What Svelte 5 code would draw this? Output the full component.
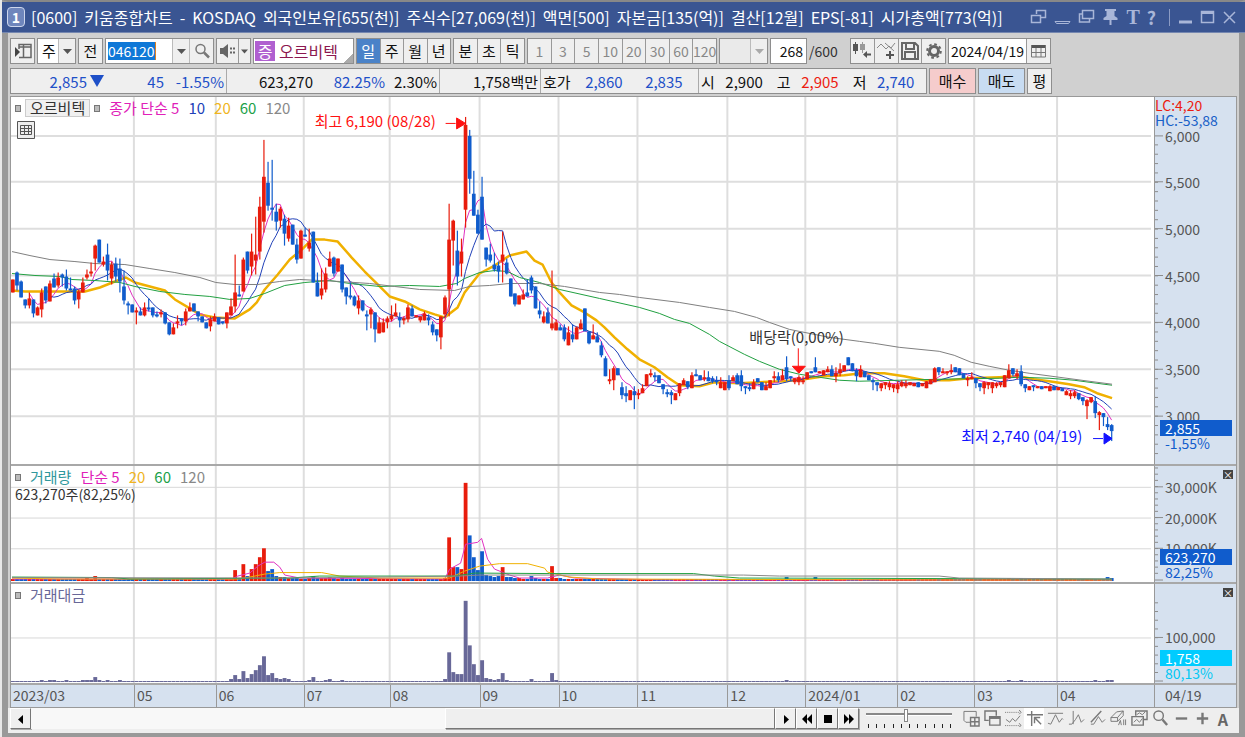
<script lang="ts">
	// kind, high, body top, body bottom, low (chart space, y grows downwards)
	const candleSource = `
r280 280 293 293|b272 273 286 291|b281 282 298 298|b300 300 306 309|r293 299 306 309|b300 300 314 318|r307 308 316 316|r289 293 310 318|b287 287 301 304|r281 284 302 302|
b274 279 288 288|r273 278 286 288|b274 275 278 287|b270 277 289 291|b278 289 291 291|b287 289 301 305|r290 292 300 309|r278 283 293 293|r270 275 278 280|r263 272 274 277|
r245 246 259 271|b240 240 263 263|r257 262 265 267|b244 255 271 281|r262 265 279 285|b258 264 277 282|b259 269 282 293|b271 287 301 305|b302 304 306 315|b305 305 313 313|
r308 311 313 325|b308 312 316 316|r303 308 316 317|b299 308 310 312|b308 308 316 318|b312 315 317 318|r310 313 315 318|b313 313 324 325|b323 323 335 336|r324 328 335 335|
r316 322 324 329|b319 319 322 326|r309 312 322 326|r303 308 312 312|b304 304 312 312|b312 312 317 322|b317 317 323 323|b323 323 329 329|r317 320 327 332|r314 317 322 322|
b318 318 325 325|b322 322 324 325|r313 313 324 329|r299 307 316 316|r255 293 307 313|b286 295 297 297|r258 260 292 292|b252 252 271 274|r234 252 267 276|r217 255 261 275|
r197 207 252 260|r140 177 222 233|b162 183 206 211|b160 208 210 221|b204 212 222 231|r207 209 221 228|b215 219 234 246|r218 226 239 242|b225 225 245 245|b239 245 260 264|
r230 231 259 259|b228 235 237 237|r229 243 249 252|b232 232 283 283|b273 283 297 297|r269 289 296 300|r268 274 290 293|r252 259 267 267|b257 258 274 277|r259 259 272 272|
b265 265 290 293|b288 288 297 305|b283 296 298 300|b296 297 306 307|r296 301 309 315|b301 301 311 312|b311 315 317 331|r308 310 315 329|b313 313 330 343|r318 323 334 334|
r319 323 333 333|r317 319 323 329|r306 316 320 322|r304 313 317 317|b313 318 321 328|r317 319 321 325|r305 308 320 323|b306 309 317 317|r316 316 318 318|r317 317 321 323|
r312 314 321 321|b315 318 321 326|b322 325 333 336|b330 330 336 342|r317 317 338 350|r296 298 315 318|r204 240 290 317|r220 221 241 266|b231 251 277 286|r239 252 264 277|
r117 125 210 228|b130 136 179 194|b171 194 216 216|b210 215 234 234|b177 197 240 240|b248 248 260 267|b244 255 261 263|b253 265 270 272|b262 266 272 283|r232 255 262 283|
b259 263 274 275|b279 279 297 297|b294 294 305 307|r296 296 305 305|r290 295 300 300|b280 293 297 297|b276 278 291 294|b287 287 309 309|b302 311 315 319|r312 317 323 324|
b308 313 324 324|r271 324 329 331|r320 323 331 331|b325 328 331 331|b325 328 340 342|r327 333 346 346|b325 335 340 343|r327 328 340 340|r320 324 330 330|b309 309 332 332|
b332 332 344 345|r325 336 340 340|b333 337 343 343|b342 346 356 358|b357 359 377 377|r370 380 382 385|r367 369 381 391|b369 369 376 376|b383 388 396 400|b387 394 397 403|
r391 391 401 401|b387 392 396 410|r390 394 396 400|r385 389 394 394|r375 375 387 387|r370 374 376 378|b373 376 378 382|b376 376 384 384|b385 385 390 395|b390 393 395 398|
b391 393 396 405|r394 394 401 401|r384 384 394 397|r379 381 386 386|b382 382 388 390|r373 376 389 389|b370 375 377 377|b376 376 381 381|r371 378 380 382|b372 378 382 382|
b377 379 382 384|b377 381 383 386|r378 383 389 389|r383 383 391 391|b376 381 389 391|r376 378 382 382|b374 376 385 385|b371 376 387 392|b387 387 389 395|b384 388 390 392|
r380 383 390 390|b379 379 383 383|b383 383 391 391|r383 387 391 391|r381 381 389 389|r372 377 379 383|b373 377 381 383|r370 376 381 381|b357 368 380 382|b377 377 379 382|
r379 379 383 385|r376 378 383 386|r377 381 383 385|r373 373 380 380|b372 372 374 374|b358 368 373 373|r372 372 374 374|r371 371 376 376|r367 370 373 373|b366 370 377 377|
r368 374 377 383|r364 370 374 377|r366 366 372 372|b358 358 366 366|b364 364 372 372|b369 371 377 382|r366 370 378 378|b372 372 378 378|b376 376 381 381|b379 381 383 391|
b383 383 386 392|r384 384 389 392|r383 383 386 390|r382 384 388 391|r385 385 389 393|r382 385 390 394|r381 383 387 388|r381 384 387 389|r383 383 386 386|r384 384 387 387|
b383 383 388 388|r384 384 387 387|r382 382 389 389|r380 380 385 385|r368 369 383 383|b368 368 373 376|r369 372 374 374|r372 372 374 376|r365 371 373 375|b368 368 373 373|
b369 369 376 376|b374 374 379 379|r377 379 381 387|r373 378 380 380|b379 379 384 389|b384 384 388 392|r382 383 389 395|r383 383 386 390|r383 383 389 394|r383 384 387 389|
r383 383 386 388|r376 376 388 388|r365 371 379 379|b369 369 375 377|r370 374 377 380|b366 372 385 387|b385 385 389 393|r387 387 391 391|b386 386 388 392|r387 387 389 389|
b387 387 390 390|r387 387 389 389|r386 387 392 392|b387 387 391 391|r388 388 391 391|b389 389 392 392|r391 392 396 396|r391 394 397 400|r391 393 397 399|b394 394 400 401|
b398 398 402 406|r400 401 407 420|r398 398 403 404|b397 402 414 419|r412 413 416 431|b414 414 418 427|b418 425 428 431|b425 426 432 442`;

	const candles = candleSource.replace(/\n/g, '').split('|').map((item, i) => {
		const [high, top, bottom, low] = item.slice(1).split(' ').map(Number);
		return { x: 12.8 + i * 4.119, up: item[0] === 'r', high, top, bottom, low };
	});

	function average(n: number) {
		const closes = candles.map((c) => (c.up ? c.top : c.bottom));
		return candles
			.slice(n - 1)
			.map((c, i) => {
				const sum = closes.slice(i, i + n).reduce((a, b) => a + b, 0);
				return `${c.x.toFixed(1)},${(sum / n).toFixed(1)}`;
			})
			.join(' ');
	}

	const ma20 = '12,291 25,292 45,292 85,292 100,288 115,282 126,278 135,283 150,287 165,291 175,300 190,309 200,315 215,318 235,319 250,310 257,303 265,290 278,275 290,260 302,250 312,240 325,240 338,242 352,258 365,272 378,285 390,297 405,302 420,310 435,315 445,318 458,308 465,293 480,274 495,266 510,256 527,252 535,261 543,265 552,283 560,293 572,306 585,313 597,321 605,328 615,338 628,350 640,360 655,368 668,378 680,386 700,387 715,383 740,384 760,383 785,382 805,380 825,377 845,376 862,374 885,374 905,377 925,381 950,381 970,379 1000,378 1020,377 1035,380 1050,382 1070,385 1085,388 1098,394 1113,399';
	const ma60 = '12,274 35,276 60,277 72,280 95,281 120,283 135,287 160,292 185,295 210,297 230,300 250,299 265,294 285,286 305,283 330,281 350,284 380,287 410,286 440,287 457,284 465,279 480,273 495,271 508,272 520,278 540,283 560,290 600,299 640,308 660,314 675,320 690,324 710,335 720,342 745,355 760,362 780,370 800,375 820,378 840,381 860,382 900,381 940,380 1000,379 1020,378 1050,379 1075,381 1090,383 1105,385 1113,386';
	const ma120 = '12,252 30,256 50,260 75,262 95,264 125,265 150,269 175,273 200,278 216,283 235,285 258,285 280,282 300,280 320,281 340,282 370,284 395,287 420,290 455,291 470,287 490,286 510,284 540,284 565,287 600,293 620,295 640,298 680,303 710,308 735,312 757,318 770,323 790,330 830,338 860,342 875,344 900,348 940,352 955,356 972,363 990,367 1010,371 1030,374 1060,378 1090,382 1113,385';

	const volumes: Record<number, number> = {
		18: 3, 20: 5, 54: 11, 55: 3, 56: 17, 57: 5, 58: 12, 59: 17, 60: 24, 61: 33, 62: 10, 63: 12, 64: 5, 65: 4, 66: 4, 67: 3, 68: 3, 69: 3,
		72: 3, 73: 5, 74: 3, 75: 3, 76: 3, 77: 4, 78: 3, 80: 3, 105: 3, 106: 44, 107: 14, 108: 14, 109: 12, 110: 99, 111: 46, 112: 24, 113: 11,
		114: 30, 115: 6, 116: 5, 117: 4, 118: 5, 119: 14, 120: 4, 121: 4, 122: 3, 123: 3, 126: 5, 127: 3, 131: 15, 132: 3, 133: 3,
		188: 4, 195: 4, 242: 3, 245: 3, 266: 4, 267: 3
	};
	const amounts: Record<number, number> = {
		7: 2, 9: 2, 10: 2, 13: 2, 17: 2, 18: 2, 19: 2, 20: 5, 21: 2, 23: 2, 26: 2, 53: 3, 54: 7, 55: 3, 56: 11, 57: 4, 58: 8, 59: 12, 60: 17, 61: 26,
		62: 7, 63: 9, 64: 4, 65: 3, 66: 4, 67: 3, 72: 2, 73: 5, 76: 2, 77: 3, 80: 2, 105: 3, 106: 30, 107: 10, 108: 8, 109: 8, 110: 82, 111: 37,
		112: 18, 113: 7, 114: 22, 115: 4, 116: 3, 117: 2, 118: 3, 119: 9, 120: 2, 126: 3, 131: 9, 132: 2, 188: 2, 242: 2, 245: 2, 263: 2, 266: 2, 267: 2
	};

	const months = [
		{ x: 11, label: '2023/03' },
		{ x: 134, label: '05' },
		{ x: 216, label: '06' },
		{ x: 304, label: '07' },
		{ x: 390, label: '08' },
		{ x: 480, label: '09' },
		{ x: 559, label: '10' },
		{ x: 638, label: '11' },
		{ x: 728, label: '12' },
		{ x: 806, label: '2024/01' },
		{ x: 898, label: '02' },
		{ x: 975, label: '03' },
		{ x: 1058, label: '04' }
	];
	const monthColumns = months.map((m, i) => `${(months[i + 1]?.x ?? 1155) - m.x}fr`).join(' ');

	const prices = [
		{ y: 136, label: '6,000' },
		{ y: 182, label: '5,500' },
		{ y: 229, label: '5,000' },
		{ y: 276, label: '4,500' },
		{ y: 323, label: '4,000' },
		{ y: 370, label: '3,500' },
		{ y: 417, label: '3,000' }
	];
	const volumeMarks = [
		{ y: 487, label: '30,000K' },
		{ y: 518, label: '20,000K' },
		{ y: 549, label: '10,000K' }
	];
	const titleParts = ['[0600]', '키움종합차트', '-', 'KOSDAQ', '외국인보유[655(천)]', '주식수[27,069(천)]', '액면[500]', '자본금[135(억)]', '결산[12월]', 'EPS[-81]', '시가총액[773(억)]'];

	const steps = (from: number, to: number, by: number) =>
		Array.from({ length: Math.floor((to - from) / by) + 1 }, (_, i) => from + i * by);
	const percent = (value: number, start: number, size: number) => ((value - start) / size) * 100;

	let code = $state('046120');
	let count = $state('268');
	let date = $state('2024/04/19');
	let period = $state('일');
	let speed = $state(46);
</script>

{#snippet down()}
	<svg class="arrow" width="9" height="5" viewBox="0 0 9 5" aria-hidden="true"><path d="M0 0h9L4.500 5z" fill="currentColor" /></svg>
{/snippet}

{#snippet verticals(y: number, h: number)}
	<g stroke="#dedede" stroke-width="2">
		{#each months.slice(1) as m}
			<line x1={m.x} x2={m.x} y1={y} y2={y + h} />
		{/each}
	</g>
{/snippet}

{#snippet ticks(y: number, h: number, major: number[], minor: number[])}
	<svg class="ticks" viewBox="0 {y} 8 {h}" preserveAspectRatio="none" aria-hidden="true">
		<g stroke="#8c8c8c" shape-rendering="crispEdges">
			{#each minor as t}<line x1="0" x2="3" y1={t} y2={t} />{/each}
			{#each major as t}<line x1="0" x2="8" y1={t} y2={t} />{/each}
		</g>
	</svg>
{/snippet}

<div class="desktop">
	<main class="window">
		<header class="title-bar">
			<span class="badge">1</span>
			<h1>{#each titleParts as part}<span>{part}</span>{/each}</h1>
			<div class="window-tools">
				<button aria-label="Link window"><svg width="17" height="16" viewBox="0 0 17 16"><path stroke-width="1.500" d="M6.500 5V1.500h9v7H11M1.500 6.500h9v7h-9z" /></svg></button>
				<button aria-label="Dock"><svg width="17" height="16" viewBox="0 0 17 16"><path d="M1 12.500h15l-1.500 2h-12z" /></svg></button>
				<button aria-label="Duplicate"><svg width="17" height="16" viewBox="0 0 17 16"><path stroke-width="1.500" d="M4.500 1.500h11v8h-11zM4 5H1.500v8h10v-3" /></svg></button>
				<button aria-label="Pin"><svg width="17" height="18" viewBox="0 0 17 18"><path fill="#a9b6d8" stroke="none" d="M3 1h11v2h-1.500v5l3 2v2H9.500v5h-2v-5h-6v-2l3-2V3H3z" /></svg></button>
				<button class="letter serif">T</button>
				<button class="letter">?</button>
				<i></i>
				<button aria-label="Minimize"><svg width="15" height="16" viewBox="0 0 15 16"><path stroke-width="3" d="M1 13h13" /></svg></button>
				<button aria-label="Maximize"><svg width="15" height="16" viewBox="0 0 15 16"><path stroke-width="1.500" d="M1.500 2.500h12v11h-12z" /><path stroke-width="3" d="M1 3.500h13" /></svg></button>
				<button aria-label="Close"><svg width="15" height="16" viewBox="0 0 15 16"><path stroke-width="1.500" d="M2 3l11 11M13 3L2 14" /></svg></button>
			</div>
		</header>

		<div class="toolbar">
			<button class="box icon" aria-label="Side panel"><svg width="18" height="18" viewBox="0 0 18 18"><path fill="none" stroke="#666" stroke-width="1.500" d="M5 7V2.500h12v13H5M9.500 3v12M5 5h12" /><path fill="#444" d="M1 5l5 5-5 5z" /></svg></button>
			<div class="box combo kind">
				<select aria-label="Market"><option>주</option></select>
				<span class="drop">{@render down()}</span>
			</div>
			<button class="box icon">전</button>
			<div class="box combo code">
				<span class="field"><input aria-label="Stock code" bind:value={code} /></span>
				<button class="drop" aria-label="Recent codes">{@render down()}</button>
				<button class="find" aria-label="Find"><svg width="16" height="16" viewBox="0 0 16 16"><g fill="none" stroke="#777"><circle cx="6.500" cy="6" r="4.500" stroke-width="1.500" /><path stroke-width="2.500" d="M10 9.500l5 5" /></g></svg></button>
			</div>
			<div class="box combo sound">
				<button aria-label="Sound"><svg width="17" height="16" viewBox="0 0 17 16"><path fill="#666" d="M1 5h3l5-4v14l-5-4H1z" /><path stroke="#666" stroke-width="2" stroke-dasharray="2 1" d="M11 5.500h5M11 9.500h5" /></svg></button>
				<button class="small" aria-label="Sound options">{@render down()}</button>
			</div>
			<div class="box name"><b>증</b><span>오르비텍</span></div>
			<div class="box group days">
				{#each ['일', '주', '월', '년'] as p}
					<button class:active={period === p} aria-pressed={period === p} onclick={() => (period = p)}>{p}</button>
				{/each}
			</div>
			<div class="box group intraday">
				{#each ['분', '초', '틱'] as p}
					<button class:active={period === p} aria-pressed={period === p} onclick={() => (period = p)}>{p}</button>
				{/each}
			</div>
			<div class="box group minutes">
				{#each [1, 3, 5, 10, 20, 30, 60, 120] as n}<button>{n}</button>{/each}
			</div>
			<div class="box combo unit">
				<select aria-label="Minute interval" disabled><option></option></select>
				<span class="drop">{@render down()}</span>
			</div>
			<input class="box count" aria-label="Candle count" bind:value={count} />
			<span class="total">/600</span>
			<div class="box group tools">
				<button aria-label="Add candle"><svg width="20" height="18" viewBox="0 0 20 18"><path fill="#555" d="M3 0h1v2h2v7H4v3H3V9H1V2h2zM15 9v2.500h4v2h-4V16l-4-3.500z" /><path fill="#999" d="M10 0h1v2h2v6h-2v3h-1V8H8V2h2z" /></svg></button>
				<button aria-label="Add indicator"><svg width="20" height="18" viewBox="0 0 20 18"><path fill="none" stroke="#888" d="M1 6l4-4 5 5 3-3 2 2 4-5M9 1l9 8" /><path fill="none" stroke="#555" stroke-width="2" d="M14 9v8M10 13h8" /></svg></button>
				<button aria-label="Save"><svg width="18" height="18" viewBox="0 0 18 18"><path fill="none" stroke="#666" stroke-width="2" d="M1 1h13l3 3v13H1zM5 1v6h8V1M4 17v-7h10v7" /></svg></button>
				<button aria-label="Settings"><svg width="16" height="16" viewBox="0 0 16 16"><circle cx="8" cy="8" r="4.500" fill="none" stroke="#666" stroke-width="3" /><circle cx="8" cy="8" r="6.800" fill="none" stroke="#666" stroke-width="2" stroke-dasharray="2.700 2.640" /></svg></button>
			</div>
			<div class="box combo date">
				<input aria-label="Date" bind:value={date} />
				<button aria-label="Calendar"><svg width="15" height="14" viewBox="0 0 15 14"><path fill="#555" d="M0 1h15v3H0z" /><path fill="none" stroke="#777" d="M.500 1v12h14V1M5 4v9M10 4v9M0 8.500h15" /></svg></button>
			</div>
		</div>

		<div class="quote">
			<div class="box values">
				<div class="cell blue"><span class="w76">2,855</span><svg class="fall" width="14" height="12" viewBox="0 0 14 12" aria-hidden="true"><path fill="#1e50c8" d="M0 0h14L7 12z" /></svg><span class="w60">45</span><span class="w60">-1.55%</span></div>
				<div class="cell"><span class="w86">623,270</span><span class="w72 blue">82.25%</span><span class="w52">2.30%</span></div>
				<div class="cell"><span class="w98">1,758백만</span></div>
				<div class="cell offers"><span class="tag">호가</span><span class="w52 blue">2,860</span><span class="w60 blue">2,835</span></div>
				<div class="cell"><span class="tag">시</span><span class="w48">2,900</span><span class="tag gap">고</span><span class="w48 red">2,905</span><span class="tag gap">저</span><span class="w48 blue">2,740</span></div>
			</div>
			<button class="box trade buy">매수</button>
			<button class="box trade sell">매도</button>
			<button class="box icon">평</button>
		</div>

		<section class="chart" aria-label="오르비텍">
			<div class="plot">
				<svg class="canvas" viewBox="11 97 1144 368" preserveAspectRatio="none" aria-hidden="true">
					{@render verticals(97, 368)}
					<g stroke="#dedede" stroke-width="2">
						{#each prices as p}<line x1="11" x2="1152" y1={p.y} y2={p.y} />{/each}
					</g>
					<g fill="none" stroke-linejoin="round">
						<polyline points={ma20} stroke="#f0b000" stroke-width="2.500" />
						<polyline points={average(5)} stroke="#e030c0" />
						<polyline points={average(10)} stroke="#2040b8" />
						<polyline points={ma60} stroke="#20a040" />
						<polyline points={ma120} stroke="#808080" />
					</g>
					{#each candles as c}
						<g fill={c.up ? '#e81c0c' : '#105ccc'}>
							<rect x={c.x - 0.5} y={c.high} width="1.200" height={c.low - c.high} />
							<rect x={c.x - 1.8} y={c.top} width="3.700" height={c.bottom - c.top} />
						</g>
					{/each}
					<path stroke="#f11" fill="#f11" d="M446 123.500h10M457 118l9 5.500-9 5.500zM799 349v18M793 367h13l-6.500 7z" />
					<path stroke="#11f" fill="#11f" d="M1094 439.500h10M1105 434l8 5.500-8 5.500z" />
				</svg>
				<div class="legend">
					<i class="mark"></i><button class="stock">오르비텍</button><i class="mark"></i>
					<span class="pink">종가 단순 5</span><span class="navy">10</span><span class="gold">20</span><span class="green">60</span><span class="gray">120</span>
				</div>
				<button class="sheet" aria-label="Data table"><svg width="18" height="18" viewBox="0 0 18 18"><path fill="#eee" stroke="#555" d="M.500.500h17v17H.500z" /><path fill="none" stroke="#555" d="M3.500 4.500h11v9h-11zM7.500 4v10M11.500 4v10M3 7.500h12M3 10.500h12" /></svg></button>
				<span class="note high" style="left: {percent(315, 11, 1144)}%; top: {percent(112, 97, 368)}%">최고 6,190 (08/28)</span>
				<span class="note event" style="left: {percent(750, 11, 1144)}%; top: {percent(329, 97, 368)}%">배당락(0,00%)</span>
				<span class="note low" style="left: {percent(962, 11, 1144)}%; top: {percent(428, 97, 368)}%">최저 2,740 (04/19)</span>
			</div>
			<div class="axis">
				{@render ticks(97, 368, prices.map((p) => p.y), steps(145, 460, 9.38))}
				{#each prices as p}<span class="mark-label" style="top: {percent(p.y, 97, 368)}%">{p.label}</span>{/each}
				<div class="limits"><span class="red">LC:4,20</span><span>HC:-53,88</span></div>
				<div class="current" style="top: {percent(421, 97, 368)}%"><b>2,855</b><span>-1,55%</span></div>
			</div>

			<div class="plot">
				<svg class="canvas" viewBox="11 466 1144 117" preserveAspectRatio="none" aria-hidden="true">
					{@render verticals(466, 117)}
					<g stroke="#d8d8d8">
						{#each volumeMarks as p}<line x1="11" x2="1152" y1={p.y + 0.5} y2={p.y + 0.5} />{/each}
					</g>
					{#each candles as c, i}
						<rect x={c.x - 1.8} y={582 - (volumes[i] ?? 2)} width="3.800" height={volumes[i] ?? 2} fill={c.up ? '#e81c0c' : '#105ccc'} />
					{/each}
					<g fill="none">
						<polyline points="12,580 232,580 238,577 250,574 258,567 265,563 274,563 280,568 285,576 300,579 445,580 450,570 461,564 466,545 478,543 482,539 488,560 495,570 510,576 520,579 548,579 560,576 575,579 670,581 1113,581" stroke="#e030c0" />
						<polyline points="12,579 60,580 240,580 265,575 280,573.500 322,573.500 340,577 380,579 450,579 465,572 480,567 500,564.500 528,564.500 545,569 548,573 570,578 600,580 960,581 1113,581" stroke="#f0b000" />
						<polyline points="12,578 112,578.500 130,580 290,579 320,577 455,577 475,574 550,574.500 694,574.500 715,577 740,579 1113,580" stroke="#20a040" />
						<polyline points="12,578.500 300,579 460,577 480,576 744,576 780,577 940,577 960,579 1113,580" stroke="#888" />
					</g>
				</svg>
				<div class="legend"><i class="mark"></i><span class="teal">거래량</span><span class="pink">단순 5</span><span class="gold">20</span><span class="green">60</span><span class="gray">120</span></div>
				<div class="summary">623,270주(82,25%)</div>
			</div>
			<div class="axis">
				{@render ticks(466, 117, [487, 518, 549, 581], steps(468, 580, 6.25))}
				{#each volumeMarks as p}<span class="mark-label" style="top: {percent(p.y, 466, 117)}%">{p.label}</span>{/each}
				<div class="current" style="top: {percent(550, 466, 117)}%"><b>623,270</b><span>82,25%</span></div>
				<button class="close" aria-label="Close volume">×</button>
			</div>

			<div class="plot">
				<svg class="canvas" viewBox="11 584 1144 100" preserveAspectRatio="none" aria-hidden="true">
					{@render verticals(584, 100)}
					<line x1="11" x2="1152" y1="638.500" y2="638.500" stroke="#d8d8d8" />
					{#each candles as c, i}
						<rect x={c.x - 1.8} y={683 - (amounts[i] ?? 1)} width="3.900" height={amounts[i] ?? 1} fill="#686898" />
					{/each}
				</svg>
				<div class="legend"><i class="mark"></i><span class="slate">거래대금</span></div>
			</div>
			<div class="axis">
				{@render ticks(584, 100, [638, 682], steps(603, 680, 8.8))}
				<span class="mark-label" style="top: {percent(638, 584, 100)}%">100,000</span>
				<div class="current cyan" style="top: {percent(651, 584, 100)}%"><b>1,758</b><span>80,13%</span></div>
				<button class="close" aria-label="Close amount">×</button>
			</div>

			<div class="months" style="grid-template-columns: {monthColumns}">
				{#each months as m}<span>{m.label}</span>{/each}
			</div>
			<div class="months last"><span>04/19</span></div>
		</section>

		<footer class="bottom">
			<button class="raised" aria-label="Scroll left"><svg width="16" height="16" viewBox="0 0 16 16"><path d="M10 4v9L5 8.500z" /></svg></button>
			<div class="track"><div class="thumb raised"></div></div>
			<button class="raised" aria-label="Scroll right"><svg width="16" height="16" viewBox="0 0 16 16"><path d="M6 4v9l5-4.500z" /></svg></button>
			<button class="raised" aria-label="Rewind"><svg width="16" height="16" viewBox="0 0 16 16"><path d="M8 3v10L3 8zM13 3v10L8 8z" /></svg></button>
			<button class="raised" aria-label="Stop"><svg width="16" height="16" viewBox="0 0 16 16"><path d="M4 4h8v8H4z" /></svg></button>
			<button class="raised" aria-label="Forward"><svg width="16" height="16" viewBox="0 0 16 16"><path d="M3 3v10l5-5zM8 3v10l5-5z" /></svg></button>
			<div class="speed">
				<input type="range" min="0" max="100" aria-label="Speed" bind:value={speed} />
				<div class="dots">{#each steps(0, 10, 1) as _}<i></i>{/each}</div>
			</div>
			<div class="draw-tools">
				<button aria-label="New pane"><svg viewBox="0 0 18 18"><path d="M8 13H3l-2-2V1.500h13V7" /><path stroke-width="1.500" d="M8 8h9v9H8zM12.500 8v9M8 12.500h9" /></svg></button>
				<button aria-label="Overlap panes"><svg viewBox="0 0 18 18"><path stroke-width="1.500" d="M5 11H1V1h12v5M6 7h11v9H6z" /><path stroke-width="3" d="M6 8h11" /></svg></button>
				<button aria-label="Range"><svg viewBox="0 0 18 18"><path stroke-dasharray="1 1" d="M0 2.500h16M0 16.500h16" /><path d="M1 10l4 3 3-4 3 3 5-6M15 0l2 2.500-2 2M15 14l2 2.500-2 1.500" /></svg></button>
				<button class="pressed" aria-label="Crosshair"><svg viewBox="0 0 18 18"><path stroke-width="1.500" d="M1 5h17M6 1v16M9 8l7 7M9 14V8h6" /></svg></button>
				<button aria-label="Horizontal line"><svg viewBox="0 0 18 18"><path d="M1 3.500h16M1 14l3 1 5-10 4 8 3-4 1 1" /></svg></button>
				<button aria-label="Vertical line"><svg viewBox="0 0 18 18"><path d="M5.500 1v14M1 15h3l4-5 3-5 3 8 3-3" /></svg></button>
				<button aria-label="Trend line"><svg viewBox="0 0 18 18"><path stroke-width="1.500" d="M2 13L13 1" /><path d="M2 15h3l5-8 4 6 3-3" /></svg></button>
				<button aria-label="Erase all"><svg viewBox="0 0 18 18"><path d="M1 8l6-6 7-1v5l-6 6H1zM1 8h7l6-7M8 8v4M9 16l2-5 1 5M14.500 10v6M16.500 10v6" /></svg></button>
				<button aria-label="Compare"><svg viewBox="0 0 18 18"><path stroke-width="1.500" d="M5 6V1h12v9h-4M1 7h12v9H1z" /><path d="M6 5l3-2 3 2 3-3M3 13l3-3 3 3 3-4" /></svg></button>
				<button aria-label="Magnify"><svg viewBox="0 0 18 18"><circle cx="7" cy="6" r="5" stroke-width="1.500" /><path stroke-width="2.500" d="M11 10l5 6" /></svg></button>
				<button aria-label="Zoom out"><svg viewBox="0 0 18 18"><path stroke-width="2.500" d="M3 9h12" /></svg></button>
				<button aria-label="Zoom in"><svg viewBox="0 0 18 18"><path stroke-width="2.500" d="M3 9h12M9 3v12" /></svg></button>
				<button class="auto">A</button>
			</div>
		</footer>
	</main>
</div>

<style>
	:global(body) {
		margin: 0;
	}

	.desktop {
		box-sizing: border-box;
		min-height: 100vh;
		display: flex;
		padding-left: 2px;
		background: #e8e8e8;
		font-family: 'Noto Sans CJK KR', sans-serif;
		font-size: 14px;
		line-height: 18px;
		color: #111;
	}

	.desktop * {
		box-sizing: border-box;
	}

	.window {
		flex: 1;
		min-width: 0;
		display: flex;
		flex-direction: column;
		border: solid #999;
		border-width: 2px 6px 4px;
		border-top-color: #888;
		background: #d0d0d0;
	}

	button,
	input,
	select {
		margin: 0;
		padding: 0;
		border: 0;
		border-radius: 0;
		background: none;
		font: inherit;
		color: inherit;
	}

	button {
		display: flex;
		align-items: center;
		justify-content: center;
	}

	.title-bar {
		height: 31px;
		display: flex;
		align-items: center;
		margin: 0 -6px;
		padding: 0 8px 0 5px;
		background: #3a5592;
		border-bottom: 1px solid #7587b0;
		color: #fff;
	}

	.badge {
		width: 18px;
		height: 20px;
		border: 1px solid #cdd6ec;
		border-radius: 4px;
		background: #6f86bc;
		text-align: center;
		font-weight: 700;
	}

	h1 {
		display: flex;
		flex: 1;
		gap: 7px;
		margin: 0 0 0 6px;
		font-size: 16px;
		line-height: 20px;
		font-weight: 400;
		white-space: nowrap;
	}

	.window-tools {
		display: flex;
		align-items: center;
		gap: 7px;
		color: #a9b6d8;
	}

	.window-tools svg {
		fill: none;
		stroke: #a9b6d8;
	}

	.window-tools i {
		width: 1px;
		height: 17px;
		margin: 0 1px 0 6px;
		background: #8b9bc4;
	}

	.letter {
		font-size: 18px;
		font-weight: 700;
	}

	.serif {
		font-family: 'Liberation Serif', serif;
		font-size: 20px;
	}

	.toolbar {
		display: flex;
		gap: 2px;
		height: 35px;
		padding: 5px 0 0 2px;
	}

	.box {
		height: 26px;
		border: 1px solid #8e8e8e;
		background: #efefef;
	}

	.icon {
		width: 25px;
		font-size: 15px;
	}

	.combo {
		display: flex;
		position: relative;
	}

	.combo select {
		flex: 1;
		min-width: 0;
		padding-left: 4px;
		appearance: none;
		background: #fff;
		font-size: 15px;
	}

	.kind {
		width: 39px;
	}

	.drop {
		width: 17px;
		display: flex;
		align-items: center;
		justify-content: center;
		border-left: 1px solid #bbb;
		color: #555;
	}

	.code {
		width: 109px;
	}

	.field {
		flex: 1;
		display: flex;
		align-items: center;
		padding-left: 2px;
		background: #fff;
	}

	.field input {
		width: 48px;
		height: 18px;
		border-right: 1px solid #e08020;
		background: #0f78d7;
		color: #fff;
	}

	.find {
		width: 24px;
		border-left: 1px solid #bbb;
	}

	.sound {
		width: 35px;
	}

	.sound button {
		flex: 1;
	}

	.sound .small {
		flex: 0 0 12px;
		border-left: 1px solid #999;
		color: #555;
	}

	.small .arrow {
		width: 7px;
	}

	.name {
		display: flex;
		align-items: center;
		gap: 4px;
		width: 101px;
		padding-left: 1px;
		background: linear-gradient(135deg, #fff 92%, #aaa 92%);
		color: #8c1850;
		font-size: 16px;
	}

	.name b {
		width: 20px;
		line-height: 20px;
		background: #b060d0;
		color: #fff;
		font-weight: 400;
		text-align: center;
	}

	.group {
		display: flex;
	}

	.group button {
		flex: 1;
		min-width: 0;
		font-size: 15px;
	}

	.group button + button {
		border-left: 1px solid #999;
	}

	.group .active {
		background: #4a82c8;
		color: #fff;
	}

	.days {
		width: 95px;
	}

	.intraday {
		width: 72px;
	}

	.minutes {
		width: 190px;
	}

	.minutes button {
		color: #888;
		font-size: 14px;
	}

	.unit {
		width: 49px;
	}

	.unit select {
		background: #e8e8e8;
	}

	.unit .drop {
		color: #aaa;
	}

	.count {
		width: 37px;
		padding-right: 3px;
		background: #fff;
		text-align: right;
	}

	.total {
		width: 39px;
		line-height: 26px;
		color: #333;
	}

	.tools {
		width: 96px;
	}

	.date input {
		width: 77px;
		padding-left: 2px;
		background: #fff;
	}

	.date button {
		width: 24px;
		border-left: 1px solid #999;
	}

	.quote {
		display: flex;
		gap: 2px;
		height: 27px;
		padding-left: 2px;
	}

	.values {
		display: flex;
		width: 917px;
		font-size: 15px;
		line-height: 23px;
		white-space: nowrap;
	}

	.cell {
		display: flex;
		align-items: center;
		text-align: right;
		padding-right: 2px;
	}

	.cell + .cell {
		border-left: 1px solid #aaa;
	}

	.fall {
		margin-left: 3px;
	}

	.w48 {
		width: 48px;
	}

	.w52 {
		width: 52px;
	}

	.w60 {
		width: 60px;
	}

	.w72 {
		width: 72px;
	}

	.w76 {
		width: 76px;
	}

	.w86 {
		width: 86px;
	}

	.w98 {
		width: 98px;
	}

	.tag {
		padding-left: 2px;
	}

	.gap {
		padding-left: 14px;
	}

	.offers {
		width: 158px;
	}

	.trade {
		width: 47px;
		font-size: 15px;
	}

	.buy {
		background: #f5cccc;
	}

	.sell {
		background: #c8dcf2;
	}

	.blue {
		color: #1e50c8;
	}

	.red {
		color: #ec1c10;
	}

	.chart {
		flex: 1;
		display: grid;
		grid-template-columns: minmax(0, 1fr) 82px;
		grid-template-rows: 369fr 118fr 101fr 23px;
		margin: 1px 2px 0 2px;
		border: 1px solid #999;
		border-bottom: 0;
		background: #fff;
	}

	.plot,
	.axis {
		position: relative;
		min-height: 0;
		border-bottom: 2px solid #a8a8a8;
	}

	.plot {
		padding: 2px 0 0 4px;
	}

	.axis {
		border-left: 1px solid #999;
		background: #d6e1ef;
		color: #555;
	}

	.canvas {
		position: absolute;
		inset: 0;
		width: 100%;
		height: 100%;
	}

	.legend {
		position: relative;
		display: flex;
		align-items: center;
		gap: 9px;
		height: 18px;
		font-size: 15px;
	}

	.mark {
		width: 6px;
		height: 7px;
		border: 1px solid #777;
		background: #bbb;
	}

	.stock {
		height: 18px;
		margin: 0 -5px;
		padding: 0 4px;
		border: 1px solid #ccc;
		background: #f0f0f0;
		color: #333;
	}

	.pink {
		color: #e020b8;
	}

	.navy {
		color: #2040b8;
	}

	.gold {
		color: #f0b420;
	}

	.green {
		color: #20a048;
	}

	.gray {
		color: #888;
	}

	.teal {
		color: #30989c;
	}

	.slate {
		color: #686898;
	}

	.sheet {
		position: relative;
		margin-top: 4px;
		padding-left: 2px;
	}

	.note {
		position: absolute;
		font-size: 15px;
		white-space: nowrap;
	}

	.high {
		color: #f11;
	}

	.event {
		color: #333;
	}

	.low {
		color: #11f;
	}

	.summary {
		position: relative;
		line-height: 16px;
		color: #333;
	}

	.ticks {
		position: absolute;
		left: 0;
		top: 0;
		width: 8px;
		height: 100%;
	}

	.mark-label {
		position: absolute;
		left: 10px;
		margin-top: -9px;
	}

	.limits,
	.current {
		position: absolute;
		display: flex;
		flex-direction: column;
	}

	.limits {
		top: 1px;
		left: 0;
		line-height: 15px;
		background: #d6e1ef;
		color: #1860c8;
	}

	.limits .red {
		color: #ec1c10;
	}

	.current {
		left: 5px;
		right: 4px;
		line-height: 15px;
		color: #105ccc;
	}

	.current b {
		padding-left: 5px;
		line-height: 16px;
		background: #105ccc;
		color: #fff;
		font-weight: 400;
	}

	.current span {
		padding-left: 5px;
	}

	.cyan {
		color: #00c8f4;
	}

	.cyan b {
		background: #00ccff;
	}

	.close {
		position: absolute;
		top: 4px;
		right: 3px;
		width: 10px;
		height: 9px;
		background: #444;
		color: #fff;
		font-size: 10px;
		line-height: 9px;
	}

	.months {
		display: grid;
		border-bottom: 1px solid #999;
		background: #d6e1ef;
		line-height: 20px;
		color: #555;
	}

	.months span {
		padding-left: 2px;
		border-left: 1px solid #999;
	}

	.months span:first-child {
		border-left: 0;
	}

	.months.last {
		border-left: 1px solid #999;
	}

	.last span {
		padding-left: 10px;
	}

	.bottom {
		display: flex;
		height: 25px;
		padding: 0 6px 4px 2px;
		background: #eee;
	}

	.raised {
		width: 21px;
		border: 1px solid;
		border-color: #fff #777 #777 #fff;
		box-shadow: 1px 1px 0 #aaa;
		background: #efefef;
	}

	.track {
		flex: 1;
		display: flex;
		padding-left: 414px;
		background: #f8f8f8;
	}

	.thumb {
		flex: 1;
	}

	.speed {
		width: 86px;
		margin: 0 9px 0 7px;
	}

	.speed input {
		display: block;
		width: 100%;
		height: 14px;
		appearance: none;
		background: linear-gradient(transparent 5px, #888 5px, #888 7px, #fff 7px, #fff 8px, transparent 8px);
	}

	.speed input::-webkit-slider-thumb {
		appearance: none;
		width: 4px;
		height: 13px;
		border: 1px solid #888;
		background: #fff;
	}

	.dots {
		display: flex;
		justify-content: space-between;
		padding: 2px 1px 0 2px;
	}

	.dots i {
		width: 1px;
		height: 4px;
		background: #222;
	}

	.draw-tools {
		display: flex;
		gap: 1px;
	}

	.draw-tools button {
		width: 20px;
	}

	.draw-tools svg {
		width: 17px;
		height: 17px;
		fill: none;
		stroke: #777;
	}

	.draw-tools .pressed {
		background: #fff;
	}

	.auto {
		color: #666;
		font-size: 16px;
		font-weight: 700;
	}
</style>
